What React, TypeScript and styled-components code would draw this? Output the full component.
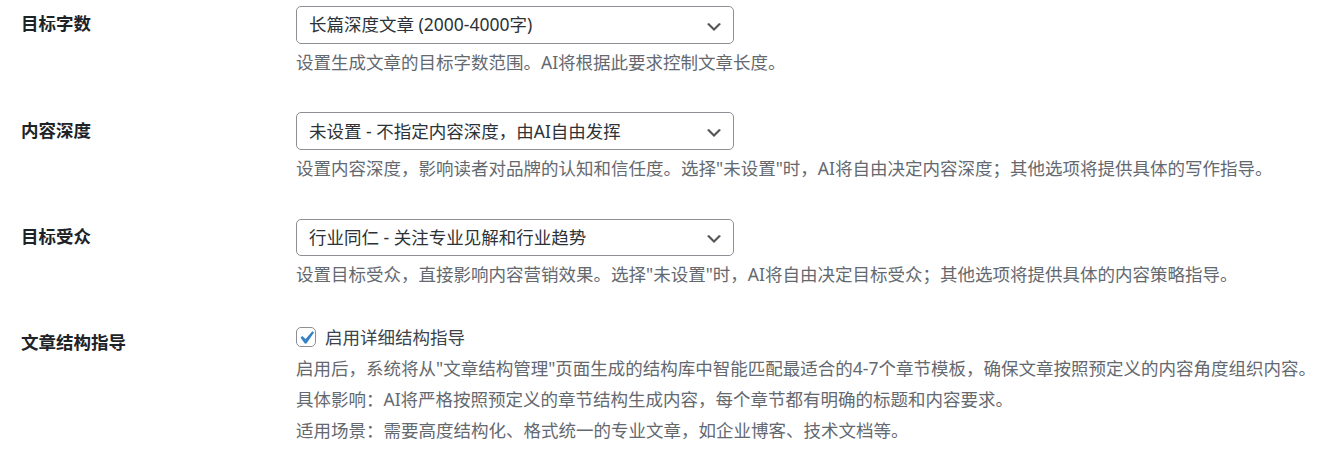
import React from "react";
import styled, { createGlobalStyle } from "styled-components";

const GlobalStyle = createGlobalStyle`
  html, body {
    margin: 0;
    padding: 0;
    background: #ffffff;
  }
  body {
    font-family: "Noto Sans", "Noto Sans CJK SC", sans-serif;
    color: #3c434a;
    overflow: hidden;
  }
`;

const FormTable = styled.div`
  margin-top: -12.75px;
  padding-left: 21px;
  display: flex;
  flex-direction: column;
`;

const Row = styled.div`
  display: grid;
  grid-template-columns: 262.5px 1fr;
`;

const Th = styled.div`
  padding: 25px 12.5px 25px 0;
  font-size: 17.5px;
  line-height: 1.3;
  font-weight: 700;
  color: #1d2327;
`;

const Td = styled.div`
  padding: 18.75px 0 18.75px 12.5px;
  font-size: 17.5px;
  line-height: 1.3;
  align-self: center;
  min-width: 0;
`;

const SelectWrap = styled.div`
  position: relative;
  width: 437.5px;
`;

const Select = styled.select`
  appearance: none;
  -webkit-appearance: none;
  display: block;
  width: 100%;
  height: 37.5px;
  box-sizing: border-box;
  padding: 0 30px 0 12px;
  font-family: "Noto Sans", "Noto Sans CJK SC", sans-serif;
  font-size: 17.5px;
  line-height: 2;
  color: #2c3338;
  background: #ffffff;
  border: 1px solid #8c8f94;
  border-radius: 5px;
  outline: none;
`;

const Chevron = styled.svg`
  position: absolute;
  right: 10px;
  top: 55%;
  transform: translateY(-50%);
  width: 20px;
  height: 20px;
  pointer-events: none;
`;

const Description = styled.p`
  margin: 5px 0 0;
  font-size: 17.5px;
  line-height: 1.5;
  color: #646970;
  white-space: nowrap;
`;

const CheckLabel = styled.label`
  display: flex;
  align-items: center;
  gap: 9px;
  height: 25px;
  color: #3c434a;
  font-size: 17.5px;
`;

const CheckBox = styled.span`
  position: relative;
  display: inline-block;
  width: 20px;
  height: 20px;
  box-sizing: border-box;
  border: 1px solid #8c8f94;
  border-radius: 5px;
  background: #ffffff;
  flex: none;
`;

const CheckMark = styled.svg`
  position: absolute;
  left: -4.5px;
  top: -3.5px;
  width: 26px;
  height: 26px;
`;

type SelectRowProps = { label: string; value: string; desc: string };

const SelectRow = ({ label, value, desc }: SelectRowProps) => (
  <Row>
    <Th>{label}</Th>
    <Td>
      <SelectWrap>
        <Select defaultValue={value}>
          <option value={value}>{value}</option>
        </Select>
        <Chevron viewBox="0 0 20 20">
          <path d="M5 6l5 5 5-5 2 1-7 7-7-7 2-1z" fill="#555" />
        </Chevron>
      </SelectWrap>
      <Description>{desc}</Description>
    </Td>
  </Row>
);

export default function App() {
  return (
    <>
      <GlobalStyle />
      <FormTable>
        <SelectRow
          label="目标字数"
          value="长篇深度文章 (2000-4000字)"
          desc="设置生成文章的目标字数范围。AI将根据此要求控制文章长度。"
        />
        <SelectRow
          label="内容深度"
          value="未设置 - 不指定内容深度，由AI自由发挥"
          desc={'设置内容深度，影响读者对品牌的认知和信任度。选择"未设置"时，AI将自由决定内容深度；其他选项将提供具体的写作指导。'}
        />
        <SelectRow
          label="目标受众"
          value="行业同仁 - 关注专业见解和行业趋势"
          desc={'设置目标受众，直接影响内容营销效果。选择"未设置"时，AI将自由决定目标受众；其他选项将提供具体的内容策略指导。'}
        />
        <Row>
          <Th>文章结构指导</Th>
          <Td>
            <CheckLabel>
              <CheckBox>
                <CheckMark viewBox="0 0 20 20">
                  <path
                    d="M14.83 4.89l1.34.94-5.81 8.38H9.02L5.78 9.67l1.34-1.25 2.57 2.4z"
                    fill="#3582c4"
                  />
                </CheckMark>
              </CheckBox>
              启用详细结构指导
            </CheckLabel>
            <Description>
              启用后，系统将从"文章结构管理"页面生成的结构库中智能匹配最适合的4-7个章节模板，确保文章按照预定义的内容角度组织内容。
            </Description>
            <Description>
              具体影响：AI将严格按照预定义的章节结构生成内容，每个章节都有明确的标题和内容要求。
            </Description>
            <Description>
              适用场景：需要高度结构化、格式统一的专业文章，如企业博客、技术文档等。
            </Description>
          </Td>
        </Row>
      </FormTable>
    </>
  );
}
